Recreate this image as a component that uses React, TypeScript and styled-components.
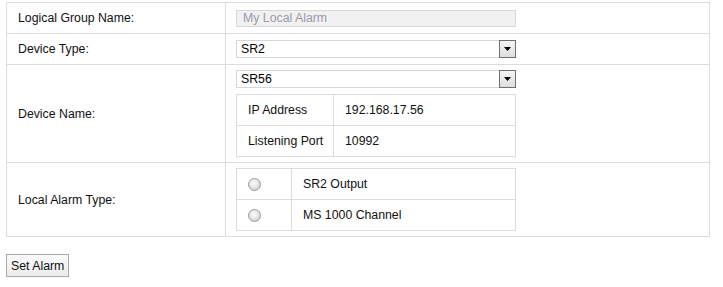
import styled, { createGlobalStyle } from "styled-components";

const GlobalStyles = createGlobalStyle`
  body {
    margin: 0;
    font-family: "Liberation Sans", Arial, sans-serif;
    font-size: 12.3px;
    color: #111;
    background: #fff;
  }
`;

const Page = styled.div`
  padding: 2px 6px;
`;

const FormTable = styled.table`
  width: 704px;
  border-collapse: collapse;
  border: 1px solid #dcdcdc;
`;

const LabelCell = styled.td`
  width: 207px;
  padding: 0 0 0 11px;
  border: 1px solid #dcdcdc;
  vertical-align: middle;
`;

const FieldCell = styled.td<{ $h: number }>`
  height: ${({ $h }) => $h}px;
  padding: 0 0 0 10px;
  border: 1px solid #dcdcdc;
  vertical-align: middle;
`;

const Stack = styled.div`
  display: flex;
  flex-direction: column;
  gap: 6px;
  width: 280px;
`;

const TextBox = styled.div`
  box-sizing: border-box;
  width: 280px;
  height: 17px;
  padding: 0 6px;
  background: #f1f1f1;
  border: 1px solid #d8d8d8;
  color: #9a9aa8;
  line-height: 15px;
`;

const SelectBox = styled.div`
  box-sizing: border-box;
  width: 280px;
  height: 18px;
  display: flex;
  align-items: center;
  justify-content: space-between;
  padding-left: 4px;
  border: 1px solid #d6d6e0;
  background: #fff;
  color: #000;
`;

const ArrowButton = styled.span`
  box-sizing: border-box;
  width: 17px;
  height: 18px;
  margin-right: -1px;
  display: flex;
  align-items: center;
  justify-content: center;
  border: 1px solid #6f6f6f;
  background: linear-gradient(#f4f4f4, #dedede);
`;

const SubTable = styled.table`
  width: 280px;
  border-collapse: collapse;
  border: 1px solid #dcdcdc;
`;

const SubCell = styled.td<{ $w?: number }>`
  ${({ $w }) => ($w ? `width: ${$w}px;` : "")}
  height: 30px;
  padding: 0 0 0 11px;
  border: 1px solid #dcdcdc;
  vertical-align: middle;
`;

const Radio = styled.span`
  display: inline-block;
  width: 11px;
  height: 11px;
  vertical-align: middle;
  border-radius: 50%;
  border: 1px solid #9c9c9c;
  background: radial-gradient(circle at 45% 40%, #ffffff 0%, #e6e6e6 45%, #bdbdbd 100%);
`;

const Button = styled.button`
  margin-top: 17px;
  height: 23px;
  padding: 0 4px;
  font-family: "Liberation Sans", Arial, sans-serif;
  font-size: 12.3px;
  color: #111;
  background: linear-gradient(#fafafa, #ececec);
  border: 1px solid #a9a9a9;
  border-radius: 0;
`;

function Select({ value }: { value: string }) {
  return (
    <SelectBox>
      <span>{value}</span>
      <ArrowButton>
        <svg width="7" height="4" viewBox="0 0 7 4">
          <path d="M0 0h7L3.5 4z" fill="#000" />
        </svg>
      </ArrowButton>
    </SelectBox>
  );
}

export default function App() {
  return (
    <Page>
      <GlobalStyles />
      <FormTable>
        <tbody>
          <tr>
            <LabelCell>Logical Group Name:</LabelCell>
            <FieldCell $h={30}>
              <TextBox>My Local Alarm</TextBox>
            </FieldCell>
          </tr>
          <tr>
            <LabelCell>Device Type:</LabelCell>
            <FieldCell $h={30}>
              <Select value="SR2" />
            </FieldCell>
          </tr>
          <tr>
            <LabelCell>Device Name:</LabelCell>
            <FieldCell $h={97}>
              <Stack>
                <Select value="SR56" />
                <SubTable>
                  <tbody>
                    <tr>
                      <SubCell $w={85}>IP Address</SubCell>
                      <SubCell>192.168.17.56</SubCell>
                    </tr>
                    <tr>
                      <SubCell $w={85}>Listening Port</SubCell>
                      <SubCell>10992</SubCell>
                    </tr>
                  </tbody>
                </SubTable>
              </Stack>
            </FieldCell>
          </tr>
          <tr>
            <LabelCell>Local Alarm Type:</LabelCell>
            <FieldCell $h={73}>
              <SubTable>
                <tbody>
                  <tr>
                    <SubCell $w={43}>
                      <Radio />
                    </SubCell>
                    <SubCell>SR2 Output</SubCell>
                  </tr>
                  <tr>
                    <SubCell $w={43}>
                      <Radio />
                    </SubCell>
                    <SubCell>MS 1000 Channel</SubCell>
                  </tr>
                </tbody>
              </SubTable>
            </FieldCell>
          </tr>
        </tbody>
      </FormTable>
      <Button type="button">Set Alarm</Button>
    </Page>
  );
}
